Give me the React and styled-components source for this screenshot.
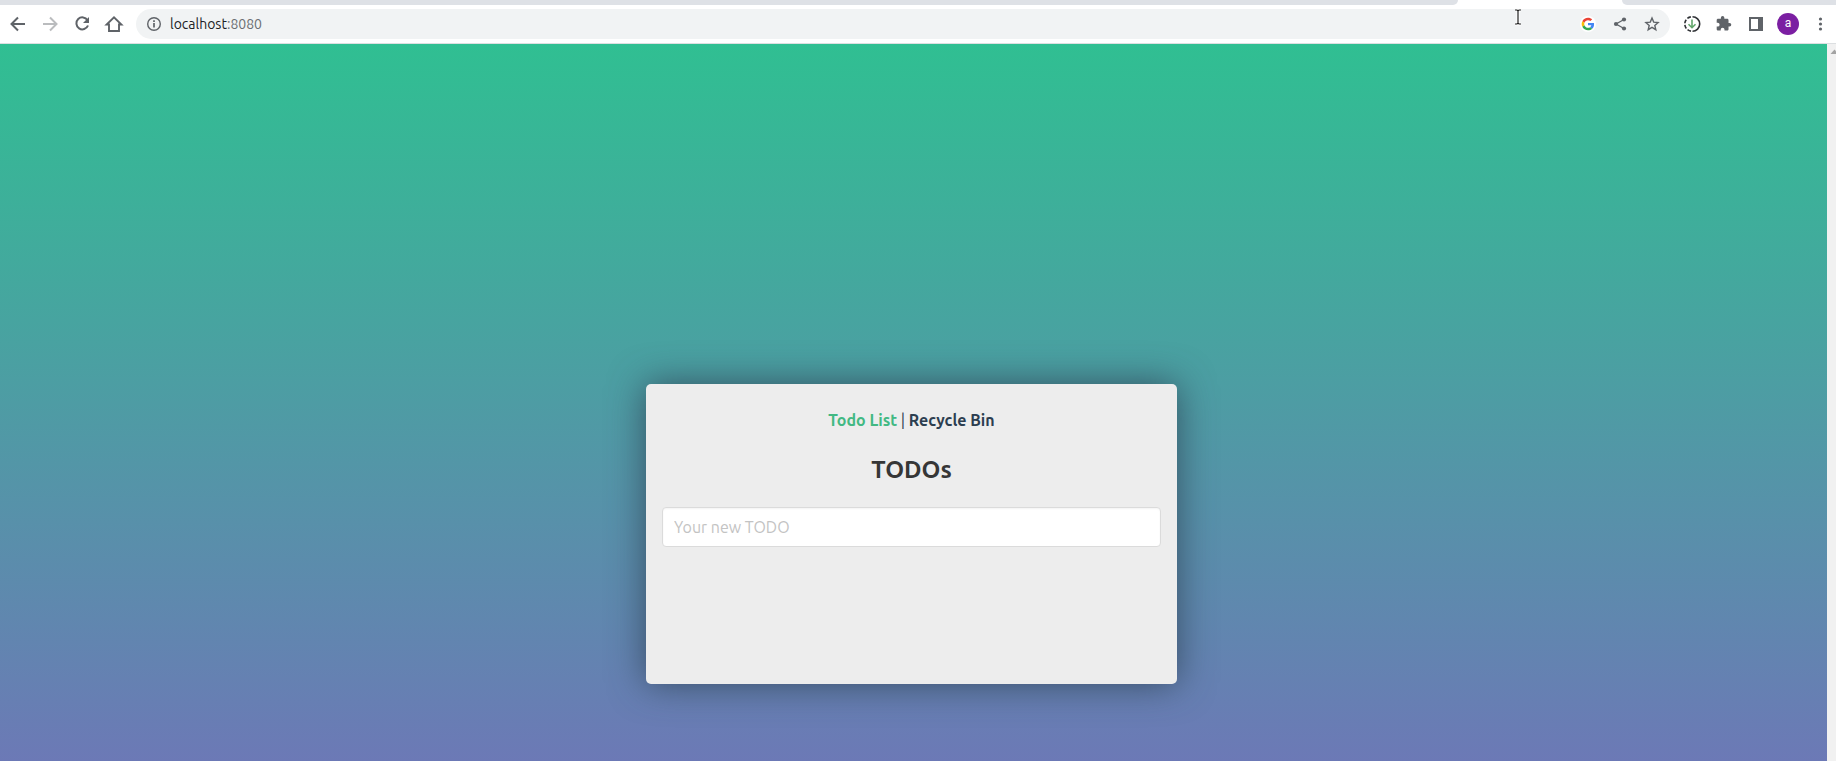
import React, { useState } from "react";
import styled, { createGlobalStyle } from "styled-components";

const GlobalStyle = createGlobalStyle`
  *, *::before, *::after { box-sizing: border-box; }
  body { margin: 0; overflow: hidden; font-family: Ubuntu, "Noto Sans", sans-serif; }
  button, input { font-family: inherit; }
`;

const Browser = styled.div`
  position: relative;
  display: flex;
  flex-direction: column;
  height: 100vh;
  background: #fff;
`;

const TabStrip = styled.div`
  display: flex;
  justify-content: space-between;
  height: 5px;
  flex: none;
`;

const TabsBefore = styled.div`
  flex: 1;
  margin-right: 164px;
  background: #dee1e6;
  border-bottom-right-radius: 6px;
`;

const TabsAfter = styled.div`
  width: 214px;
  background: #dee1e6;
  border-bottom-left-radius: 6px;
`;

const Toolbar = styled.header`
  display: flex;
  align-items: center;
  gap: 8px;
  height: 39px;
  flex: none;
  padding: 0 2px 0 4px;
  border-bottom: 1px solid #dcdfe1;
`;

const ButtonGroup = styled.div`
  display: flex;
  align-items: center;
  gap: 4px;
`;

const IconButton = styled.button`
  display: flex;
  align-items: center;
  justify-content: center;
  width: 28px;
  height: 28px;
  padding: 0;
  border: 0;
  border-radius: 50%;
  background: none;
  color: ${(p) => (p.$muted ? "#babcbe" : "#5f6368")};

  svg { display: block; }
`;

const AddressBar = styled.div`
  display: flex;
  align-items: center;
  flex: 1;
  height: 30px;
  padding: 0 4px;
  border-radius: 15px;
  background: #f1f3f4;
`;

const Address = styled.div`
  flex: 1;
  padding-left: 2px;
  font-size: 14px;
  line-height: 20px;
  color: #202124;
`;

const Port = styled.span`
  color: #6b6f73;
`;

const Avatar = styled.span`
  width: 22px;
  height: 22px;
  border-radius: 50%;
  background: #7b1fa2;
  color: #fff;
  font-family: Roboto, sans-serif;
  font-size: 12px;
  line-height: 21px;
  text-align: center;
`;

const Viewport = styled.div`
  display: flex;
  flex: 1;
  min-height: 0;
`;

const Page = styled.main`
  display: flex;
  flex: 1;
  align-items: flex-end;
  justify-content: center;
  padding: 0 4px 77px 0;
  background: linear-gradient(#30bf92, #6c79b6);
`;

const ScrollTrack = styled.div`
  width: 9px;
  overflow: hidden;
  background: #f1f1f1;

  svg { display: block; }
`;

const Card = styled.section`
  display: flex;
  flex-direction: column;
  width: 531px;
  max-width: 100%;
  min-height: 300px;
  padding: 24px 16px;
  border-radius: 5px;
  background: #ededed;
  box-shadow: 0 0 36px rgba(44, 62, 80, 0.8);
  text-align: center;
`;

const Nav = styled.nav`
  font-size: 16px;
  line-height: 24px;
  color: #2c3e50;
`;

const NavLink = styled.a`
  color: ${(p) => (p.$active ? "#42b983" : "#2c3e50")};
  font-weight: 700;
  text-decoration: none;
`;

const Title = styled.h1`
  margin: 20px 0;
  font-size: 24px;
  line-height: 35px;
  font-weight: 700;
  color: #363636;
`;

const TodoInput = styled.input`
  width: 100%;
  height: 40px;
  padding: 0 11px;
  border: 1px solid #dbdbdb;
  border-radius: 4px;
  background: #fff;
  box-shadow: inset 0 1px 2px rgba(10, 10, 10, 0.05);
  color: #363636;
  font-size: 16px;

  &::placeholder { color: #c3c3c3; opacity: 1; }
`;

const Pointer = styled.svg`
  position: absolute;
  top: 8px;
  right: 313px;
  pointer-events: none;
`;

function Icon({ size = 20, children }) {
  return (
    <svg width={size} height={size} viewBox="0 0 20 20" fill="none" stroke="currentColor" strokeWidth="2" aria-hidden="true">
      {children}
    </svg>
  );
}

const BackIcon = () => <Icon><path d="M17 10H4.500M10 3.500 3.500 10l6.500 6.500" /></Icon>;
const ForwardIcon = () => <Icon><path d="M3 10h12.500M10 3.500 16.500 10 10 16.500" /></Icon>;
const ReloadIcon = () => (
  <Icon>
    <path d="M15.500 6.200A6 6 0 1 0 16 11.500" />
    <path d="M17 3v6h-6z" fill="currentColor" stroke="none" />
  </Icon>
);
const HomeIcon = () => (
  <Icon><path d="M2.600 10.500H5V17h10v-6.500h2.400L10 3.300z" strokeWidth="1.900" /></Icon>
);
const InfoIcon = () => (
  <Icon>
    <circle cx="10" cy="10" r="6.300" strokeWidth="1.400" />
    <path d="M10 9v4.500M10 6.200v1.700" strokeWidth="1.700" />
  </Icon>
);
const GoogleIcon = () => (
  <svg width="16" height="16" viewBox="0 0 48 48" aria-hidden="true">
    <circle cx="24" cy="24" r="24" fill="#fff" />
    <g transform="translate(5 5) scale(.79)">
      <path fill="#ea4335" d="M24 9.500c3.540 0 6.710 1.220 9.210 3.600l6.850-6.850C35.900 2.380 30.470 0 24 0 14.620 0 6.510 5.380 2.560 13.220l7.980 6.190C12.430 13.720 17.740 9.500 24 9.500z" />
      <path fill="#4285f4" d="M46.980 24.550c0-1.570-.15-3.090-.38-4.550H24v9.020h12.940c-.58 2.960-2.260 5.480-4.780 7.180l7.730 6c4.510-4.180 7.090-10.360 7.090-17.650z" />
      <path fill="#fbbc05" d="M10.530 28.590A14.500 14.500 0 0 1 9.770 24c0-1.600.27-3.140.76-4.590l-7.980-6.190A24 24 0 0 0 0 24c0 3.880.92 7.540 2.560 10.780z" />
      <path fill="#34a853" d="M24 48c6.480 0 11.930-2.130 15.890-5.810l-7.730-6c-2.150 1.450-4.920 2.300-8.160 2.300-6.260 0-11.570-4.220-13.470-9.910l-7.980 6.190C6.510 42.620 14.620 48 24 48z" />
    </g>
  </svg>
);
const ShareIcon = () => (
  <Icon>
    <path d="M14 5.500 6 10l8 4.500" strokeWidth="1.300" />
    <g fill="currentColor" stroke="none">
      <circle cx="14" cy="5.500" r="2.100" />
      <circle cx="6" cy="10" r="2.100" />
      <circle cx="14" cy="14.500" r="2.100" />
    </g>
  </Icon>
);
const StarIcon = () => (
  <Icon>
    <path d="m10 4 1.700 4.100 4.400.4-3.300 2.900 1 4.300L10 13.400l-3.800 2.300 1-4.300-3.300-2.900 4.400-.4z" strokeWidth="1.400" />
  </Icon>
);
const DownloadIcon = () => (
  <Icon>
    <path d="M10.500 2.800a7.200 7.200 0 0 1 0 14.400" stroke="#303236" strokeWidth="1.600" />
    <path d="M10 17.200a7.200 7.200 0 0 1 0-14.400" stroke="#303236" strokeWidth="1.600" strokeDasharray="3.800 1.700" strokeDashoffset="-1" />
    <path d="M10 5.500v8M6.500 10.200l3.500 3.500 3.500-3.500" stroke="#62a66b" strokeWidth="1.600" />
  </Icon>
);
const PuzzleIcon = () => (
  <svg width="16" height="16" viewBox="1 1 23 23" fill="currentColor" aria-hidden="true">
    <path d="M20.500 11H19V7c0-1.100-.9-2-2-2h-4V3.500a2.500 2.500 0 0 0-5 0V5H4c-1.100 0-1.990.9-1.990 2v3.800H3.500a2.700 2.700 0 0 1 0 5.400H2V20c0 1.100.9 2 2 2h3.800v-1.500a2.700 2.700 0 0 1 5.400 0V22H17c1.100 0 2-.9 2-2v-4h1.500a2.500 2.500 0 0 0 0-5z" />
  </svg>
);
const SidePanelIcon = () => (
  <Icon>
    <path d="M4 4h12v12H4z" />
    <path d="M12 3h5v14h-5z" fill="currentColor" stroke="none" />
  </Icon>
);
const MenuIcon = () => (
  <Icon>
    <g fill="currentColor" stroke="none">
      <circle cx="10.500" cy="5" r="1.600" />
      <circle cx="10.500" cy="10" r="1.600" />
      <circle cx="10.500" cy="15" r="1.600" />
    </g>
  </Icon>
);

export default function App() {
  const [todo, setTodo] = useState("");
  return (
    <>
      <GlobalStyle />
      <Browser>
        <TabStrip>
          <TabsBefore />
          <TabsAfter />
        </TabStrip>
        <Toolbar>
          <ButtonGroup>
            <IconButton aria-label="Back"><BackIcon /></IconButton>
            <IconButton aria-label="Forward" $muted><ForwardIcon /></IconButton>
            <IconButton aria-label="Reload"><ReloadIcon /></IconButton>
            <IconButton aria-label="Home"><HomeIcon /></IconButton>
          </ButtonGroup>
          <AddressBar>
            <IconButton aria-label="Site information"><InfoIcon /></IconButton>
            <Address>localhost<Port>:8080</Port></Address>
            <ButtonGroup>
              <IconButton aria-label="Search with Google"><GoogleIcon /></IconButton>
              <IconButton aria-label="Share"><ShareIcon /></IconButton>
              <IconButton aria-label="Bookmark"><StarIcon /></IconButton>
            </ButtonGroup>
          </AddressBar>
          <ButtonGroup>
            <IconButton aria-label="Downloads"><DownloadIcon /></IconButton>
            <IconButton aria-label="Extensions"><PuzzleIcon /></IconButton>
            <IconButton aria-label="Side panel"><SidePanelIcon /></IconButton>
            <IconButton aria-label="Profile"><Avatar>a</Avatar></IconButton>
            <IconButton aria-label="Menu"><MenuIcon /></IconButton>
          </ButtonGroup>
        </Toolbar>
        <Viewport>
          <Page>
            <Card>
              <Nav>
                <NavLink href="#todos" $active>Todo List</NavLink> | <NavLink href="#bin">Recycle Bin</NavLink>
              </Nav>
              <Title>TODOs</Title>
              <TodoInput
                aria-label="Your new TODO"
                placeholder="Your new TODO"
                value={todo}
                onChange={(e) => setTodo(e.target.value)}
              />
            </Card>
          </Page>
          <ScrollTrack>
            <svg width="15" height="15" viewBox="0 0 15 15" aria-hidden="true">
              <path d="M3.500 10 7.500 5.500l4 4.500z" fill="#a3a3a3" />
            </svg>
          </ScrollTrack>
        </Viewport>
        <Pointer width="10" height="18" viewBox="0 0 10 18" fill="none" aria-hidden="true">
          <path d="M2 2h6M5 2v14M2 16h6" stroke="#fff" strokeWidth="3" />
          <path d="M2 2h2l1 1 1-1h2M5 3v12M2 16h2l1-1 1 1h2" stroke="#222" strokeWidth="1.200" />
        </Pointer>
      </Browser>
    </>
  );
}
